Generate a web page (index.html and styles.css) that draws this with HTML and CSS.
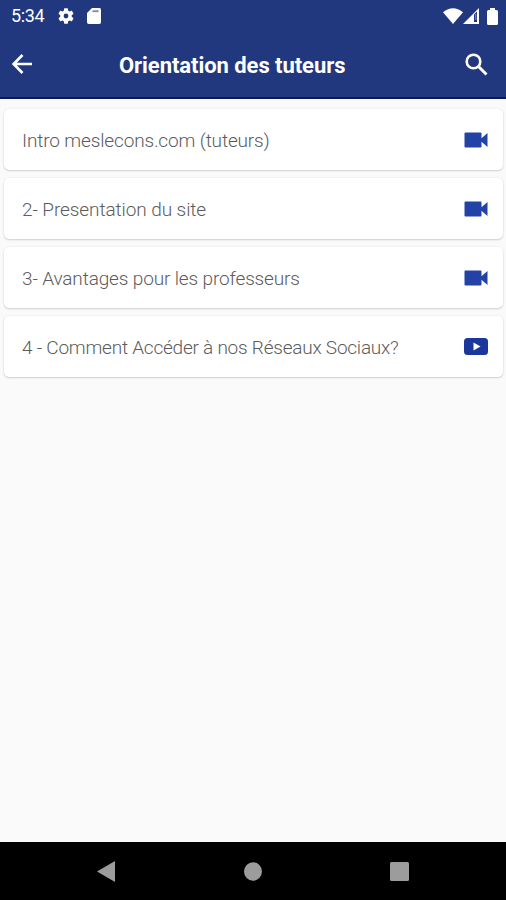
FILE: index.html
```html
<!DOCTYPE html>
<html lang="fr">
<head>
<meta charset="utf-8">
<title>Orientation des tuteurs</title>
<link rel="stylesheet" href="styles.css">
</head>
<body>
<header class="top">
  <div class="status">
    <span class="clock">5:34</span>
    <svg class="gear" width="16" height="16" viewBox="2 2 20 20"><path fill="#fff" d="M19.14 12.94c.04-.3.06-.61.06-.94s-.02-.64-.07-.94l2.03-1.58a.49.49 0 0 0 .12-.61l-1.92-3.32a.49.49 0 0 0-.59-.22l-2.39.96a7 7 0 0 0-1.62-.94l-.36-2.54a.48.48 0 0 0-.48-.41h-3.84a.48.48 0 0 0-.47.41l-.36 2.54c-.59.24-1.13.57-1.62.94l-2.39-.96a.48.48 0 0 0-.59.22L2.74 8.87a.48.48 0 0 0 .12.61l2.03 1.58c-.05.3-.09.63-.09.94s.02.64.07.94l-2.03 1.58a.49.49 0 0 0-.12.61l1.92 3.32c.12.22.37.29.59.22l2.39-.96c.5.38 1.03.7 1.62.94l.36 2.54c.05.24.24.41.48.41h3.84c.24 0 .44-.17.47-.41l.36-2.54c.59-.24 1.13-.56 1.62-.94l2.39.96c.22.08.47 0 .59-.22l1.92-3.32a.48.48 0 0 0-.12-.61zM12 15a3 3 0 1 1 0-6 3 3 0 0 1 0 6z"/></svg>
    <svg class="sd" width="14" height="16" viewBox="0 0 14 16"><path fill="#fff" d="M5 0h7.200A1.700 1.700 0 0 1 14 1.700v12.600a1.700 1.700 0 0 1-1.700 1.700H1.700A1.700 1.700 0 0 1 0 14.300V5z"/><path stroke="#22387e" stroke-width="1.800" d="M5.500 3.200h6" opacity=".6"/></svg>
    <span class="grow"></span>
    <svg width="20" height="16" viewBox="0 0 20 16"><path fill="#fff" d="M0 4.200Q10-3.600 20 4.200L10 16z"/></svg>
    <svg class="signal" width="16" height="16" viewBox="0 0 16 16"><path fill="#fff" fill-rule="evenodd" d="M16 0v16H0zM11 6.500V14h3V3.500z"/><path fill="#fff" d="M12.200 6h1.100v6h-1.100z" opacity=".45"/></svg>
    <svg class="battery" width="11" height="17" viewBox="0 0 11 17"><path fill="#fff" d="M3 0h5v2h1.500A1.500 1.500 0 0 1 11 3.500v12A1.500 1.500 0 0 1 9.500 17h-8A1.500 1.500 0 0 1 0 15.500v-12A1.500 1.500 0 0 1 1.500 2H3z"/></svg>
  </div>
  <div class="bar">
    <svg class="back" width="20" height="20" viewBox="0 0 20 20"><path fill="none" stroke="#fff" stroke-width="2.600" d="M20 10H2M10.500 1L1.600 10l8.900 9"/></svg>
    <h1 class="title">Orientation des tuteurs</h1>
    <svg class="search" width="23" height="23" viewBox="0 0 23 23"><circle cx="8.500" cy="8.500" r="6.800" fill="none" stroke="#fff" stroke-width="2.600"/><path stroke="#fff" stroke-width="3" d="M13.500 13.500l8 8"/></svg>
  </div>
</header>
<main class="list">
  <div class="card"><span class="label">Intro meslecons.com (tuteurs)</span><svg width="24" height="16" viewBox="0 0 24 16"><path fill="#2342a5" d="M1.500.500h15q1 0 1 1v4.800L23.500 1v14l-6-5.300v4.800q0 1-1 1h-15q-1 0-1-1v-13q0-1 1-1z"/></svg></div>
  <div class="card"><span class="label short">2- Presentation du site</span><svg width="24" height="16" viewBox="0 0 24 16"><path fill="#2342a5" d="M1.500.500h15q1 0 1 1v4.800L23.500 1v14l-6-5.300v4.800q0 1-1 1h-15q-1 0-1-1v-13q0-1 1-1z"/></svg></div>
  <div class="card"><span class="label">3- Avantages pour les professeurs</span><svg width="24" height="16" viewBox="0 0 24 16"><path fill="#2342a5" d="M1.500.500h15q1 0 1 1v4.800L23.500 1v14l-6-5.300v4.800q0 1-1 1h-15q-1 0-1-1v-13q0-1 1-1z"/></svg></div>
  <div class="card"><span class="label long">4 - Comment Accéder à nos Réseaux Sociaux?</span><svg width="24" height="17" viewBox="0 0 24 17"><rect width="24" height="17" rx="3.500" fill="#1b379b"/><path fill="#fff" d="M9.500 4.500v8l7-4z"/></svg></div>
</main>
<nav class="nav">
  <svg width="18" height="21" viewBox="0 0 18 21"><path fill="#9c9c9c" d="M18 0v21L0 10.500z"/></svg>
  <svg width="18" height="19" viewBox="0 0 18 19"><ellipse cx="9" cy="9.500" rx="9" ry="9.300" fill="#9c9c9c"/></svg>
  <svg width="19" height="19" viewBox="0 0 19 19"><rect width="19" height="19" rx="1.500" fill="#9c9c9c"/></svg>
</nav>
</body>
</html>
```

FILE: styles.css
```css
* { box-sizing: border-box; }
body {
  margin: 0;
  height: 900px;
  display: flex;
  flex-direction: column;
  background: #fafafa;
  font-family: Roboto, sans-serif;
  overflow: hidden;
}
svg { display: block; flex: none; }
.top {
  height: 99px;
  background: #22387e;
  border-bottom: 2px solid #0c1760;
  color: #fff;
}
.status {
  height: 32px;
  display: flex;
  align-items: center;
  padding: 0 8px 0 11px;
}
.clock { width: 47px; font-size: 18px; line-height: 32px; letter-spacing: -.4px; }
.gear { margin-right: 13px; }
.grow { flex: 1; }
.battery { margin-left: 8px; }
.bar {
  height: 66px;
  display: flex;
  align-items: center;
  padding: 0 18px 0 12px;
}
.back, .search { margin-bottom: 2px; }
.title {
  flex: 1;
  margin: 2px 0 0 87px;
  font-size: 22px;
  font-weight: 700;
  line-height: 30px;
  letter-spacing: -.06px;
  white-space: nowrap;
}
.list {
  flex: 1;
  display: flex;
  flex-direction: column;
  gap: 8px;
  padding: 10px 3px 0 4px;
}
.card {
  height: 61px;
  display: flex;
  align-items: center;
  justify-content: space-between;
  padding: 0 15px 0 18px;
  background: #fff;
  border-radius: 5px;
  box-shadow: 0 1px 2px rgba(0, 0, 0, .16), 0 0 2px rgba(0, 0, 0, .08);
  color: #5c5c5c;
  font-size: 19px;
  font-weight: 300;
  white-space: nowrap;
}
.label { padding-top: 2px; letter-spacing: -.14px; }
.short { letter-spacing: -.09px; }
.long { letter-spacing: -.23px; }
.nav {
  height: 58px;
  display: flex;
  align-items: center;
  justify-content: space-between;
  padding: 0 97px;
  background: #000;
}
```
